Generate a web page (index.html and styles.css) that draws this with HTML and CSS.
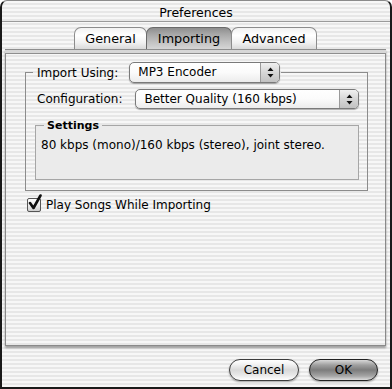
FILE: index.html
```html
<!DOCTYPE html>
<html>
<head>
<meta charset="utf-8">
<title>Preferences</title>
<link rel="stylesheet" href="styles.css">
</head>
<body>
<div class="window">
  <div class="titlebar">Preferences</div>
  <div class="tabs">
    <div class="tab">General</div>
    <div class="tab active">Importing</div>
    <div class="tab">Advanced</div>
  </div>
  <div class="panel">
    <div class="panel-bar"></div>
    <fieldset class="group">
      <legend class="group-legend">
        <span class="label">Import Using:</span>
        <span class="popup popup-import"><span class="popup-text">MP3 Encoder</span><span class="arrows"><svg width="7" height="11" viewBox="0 0 7 11"><path d="M3.5 0.5 L6.5 4 L0.5 4 Z M0.5 7 L6.5 7 L3.5 10.5 Z" fill="#111"/></svg></span></span>
      </legend>
      <div class="config-row">
        <span class="label">Configuration:</span>
        <span class="popup popup-config"><span class="popup-text">Better Quality (160 kbps)</span><span class="arrows"><svg width="7" height="11" viewBox="0 0 7 11"><path d="M3.5 0.5 L6.5 4 L0.5 4 Z M0.5 7 L6.5 7 L3.5 10.5 Z" fill="#111"/></svg></span></span>
      </div>
      <fieldset class="settings">
        <legend class="settings-legend">Settings</legend>
        <div class="settings-text">80 kbps (mono)/160 kbps (stereo), joint stereo.</div>
      </fieldset>
    </fieldset>
    <div class="check-row">
      <span class="checkbox"><svg class="checkmark" width="16" height="18" viewBox="0 0 16 18"><path d="M3 9 L6.5 14 L13.5 1.5" fill="none" stroke="#111" stroke-width="2.6" stroke-linecap="round" stroke-linejoin="round"/></svg></span>
      <span class="check-label">Play Songs While Importing</span>
    </div>
  </div>
  <div class="buttons">
    <button class="btn">Cancel</button>
    <button class="btn btn-default">OK</button>
  </div>
</div>
</body>
</html>
```
FILE: styles.css
```css
* { box-sizing: border-box; }
html, body { margin: 0; padding: 0; }
body {
  width: 392px;
  height: 389px;
  background: #fff;
  font-family: "DejaVu Sans", sans-serif;
  font-size: 12px;
  color: #000;
}
.window {
  width: 392px;
  height: 389px;
  border: 2px solid #1a1a1a;
  border-top: 1px solid #8a8a8a;
  border-radius: 7px 7px 0 0;
  background: repeating-linear-gradient(to bottom, #f7f7f7 0 2px, #e7e7e7 2px 4px);
  display: flex;
  flex-direction: column;
  overflow: hidden;
}
.titlebar {
  height: 21px;
  border-bottom: 1px solid #9a9a9a;
  text-align: center;
  font-size: 12.5px;
  line-height: 21px;
  padding-top: 1px;
}
.tabs {
  display: flex;
  justify-content: center;
  margin-top: 5px;
  height: 22px;
  position: relative;
  z-index: 1;
  font-size: 12.8px;
}
.tab {
  height: 22px;
  padding: 0;
  border: 1px solid #8c8c8c;
  border-bottom: none;
  border-radius: 7px 7px 0 0;
  background: linear-gradient(to bottom, #f2f2f2 0%, #ffffff 35%, #f1f1f1 70%, #d9d9d9 100%);
  line-height: 22px;
  text-align: center;
  margin-left: -1px;
}
.tab:nth-child(1) { width: 73px; }
.tab:nth-child(2) { width: 86px; }
.tab:nth-child(3) { width: 86px; }
.tab.active {
  background: linear-gradient(to bottom, #8e8e8e 0%, #a8a8a8 30%, #c4c4c4 70%, #d6d6d6 100%);
  border-color: #6a6a6a;
}
.panel {
  margin: 0 4px 0 3px;
  height: 297px;
  border: 1px solid #8a8a8a;
  border-top: none;
  box-shadow: 0 2px 2px rgba(0, 0, 0, 0.35);
  display: flex;
  flex-direction: column;
}
.panel-bar {
  height: 5px;
  margin: 0 -1px;
  border-top: 1px solid #8e8e8e;
  border-bottom: 1px solid #8e8e8e;
  background: #d7d7d7;
}
.group {
  margin: 8px 17px 0 19px;
  padding: 6px 8px 10px 9px;
  border: 1px solid #8c8c8c;
  min-width: 0;
}
.group-legend {
  margin-left: -2px;
  padding: 0 1px 0 4px;
  display: flex;
  align-items: center;
  gap: 11px;
}
.label { white-space: nowrap; }
.popup {
  display: flex;
  align-items: stretch;
  height: 21px;
  border: 1px solid #7a7a7a;
  border-radius: 5px;
  background: linear-gradient(to bottom, #ffffff 0%, #fbfbfb 50%, #ececec 100%);
  box-shadow: 0 1px 1px rgba(0, 0, 0, 0.3);
  overflow: hidden;
}
.popup-import { width: 151px; }
.popup-text {
  flex: 1;
  padding-left: 8px;
  line-height: 19px;
  white-space: nowrap;
}
.arrows {
  width: 19px;
  border-left: 1px solid #9a9a9a;
  background: linear-gradient(to bottom, #f0f0f0 0%, #d6d6d6 50%, #c2c2c2 100%);
  display: flex;
  align-items: center;
  justify-content: center;
}
.config-row {
  display: flex;
  align-items: center;
  gap: 13px;
  padding-left: 2px;
}
.popup-config {
  flex: 1;
  height: 20px;
}
.popup-config .popup-text { line-height: 18px; }
.settings {
  margin: 10px 0 0;
  padding: 6px 5px 26px;
  border: 1px solid #a6a6a6;
  background: #ebebeb;
  min-width: 0;
}
.settings-legend {
  margin-left: 3px;
  padding: 0 3px;
  font-size: 11px;
  font-weight: bold;
  line-height: 13px;
}
.settings-text { line-height: 15px; }
.check-row {
  display: flex;
  align-items: center;
  gap: 5px;
  margin: 7px 0 0 21px;
}
.checkbox {
  width: 14px;
  height: 14px;
  border: 1px solid #555;
  border-radius: 2px;
  background: linear-gradient(to bottom, #ffffff 0%, #eeeeee 50%, #cfcfcf 100%);
  position: relative;
}
.checkmark {
  position: absolute;
  left: -1px;
  top: -5px;
}
.buttons {
  display: flex;
  justify-content: flex-end;
  gap: 10px;
  margin-top: 13px;
  padding-right: 12px;
}
.btn {
  width: 70px;
  height: 22px;
  border: 1px solid #3c3c3c;
  border-radius: 11px;
  font-family: "DejaVu Sans", sans-serif;
  font-size: 12px;
  color: #000;
  padding: 0;
  background: linear-gradient(to bottom, #ffffff 0%, #f4f4f4 20%, #d9d9d9 50%, #e8e8e8 75%, #ffffff 100%);
  box-shadow: 0 1px 2px rgba(0, 0, 0, 0.35);
}
.btn-default {
  width: 69px;
  border-color: #222;
  background: linear-gradient(to bottom, #d8d8d8 0%, #a0a0a0 25%, #7c7c7c 50%, #a4a4a4 80%, #dcdcdc 100%);
}
```
